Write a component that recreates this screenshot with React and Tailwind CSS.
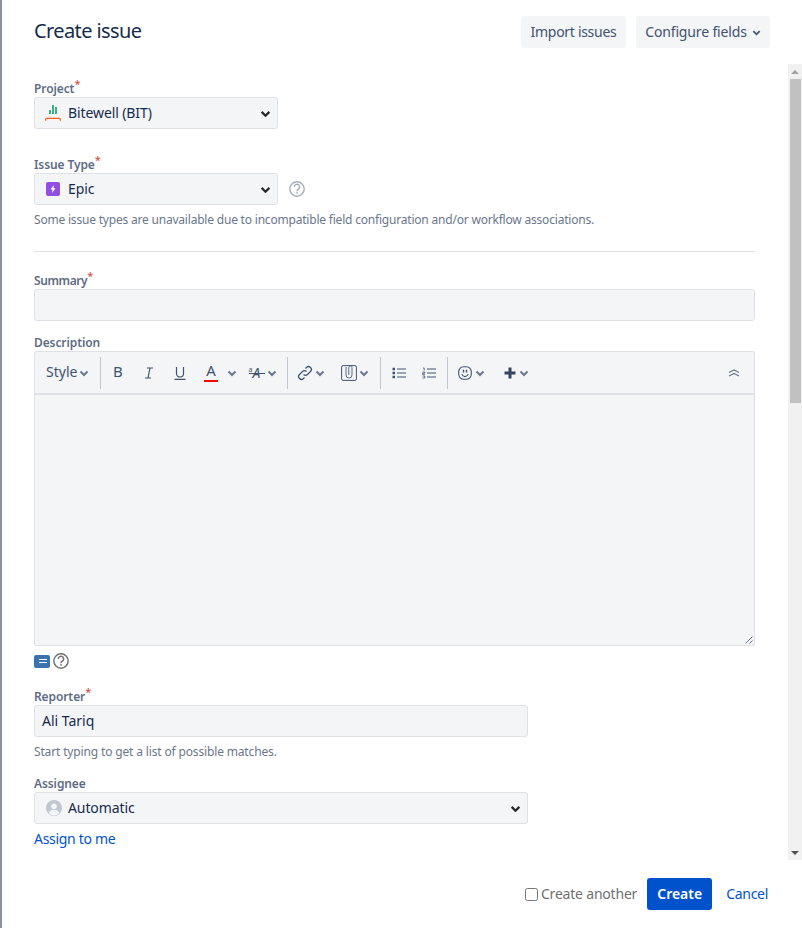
const font = { fontFamily: '"Noto Sans", sans-serif' };

const Chev = ({ className = '' }) => (
  <svg viewBox="0 0 10 10" className={className} fill="none" stroke="currentColor" strokeWidth="2">
    <path d="M1.500 3.500 5 7l3.500-3.500" />
  </svg>
);

const Label = ({ title, required, className = '', titleClass = 'tracking-[-0.1px]' }) => (
  <div className={`h-[18px] text-[12px] leading-[20px] font-semibold text-[#5e6c84] ${className}`}>
    <span className={titleClass}>{title}</span>
    {required && <span className="relative -top-[5px] text-[11px] font-normal leading-none text-[#d04437]">*</span>}
  </div>
);

const Select = ({ icon, value, className = '' }) => (
  <div className={`flex h-8 items-center rounded-[3px] border border-[#dfe1e6] bg-[#f4f5f7] pl-[11px] pr-[6px] text-[14px] text-[#172b4d] ${className}`}>
    <span className="flex w-[22px] shrink-0 items-center">{icon}</span>
    <span className="flex-1 pb-[2px] tracking-[-0.1px]">{value}</span>
    <Chev className="h-[11px] w-[11px] text-[#25272b]" />
  </div>
);

const Sep = () => <div className="mx-[5px] h-8 w-[1px] bg-[#c1c7d0]" />;

const ToolBtn = ({ children, className = '' }) => (
  <div className={`flex h-full items-center justify-center text-[#42526e] ${className}`}>{children}</div>
);

const SmallChev = () => <Chev className="h-[10px] w-[10px] shrink-0 text-[#6b778c]" />;

const HelpIcon = ({ className = '' }) => (
  <svg viewBox="0 0 16 16" className={`h-4 w-4 ${className}`} fill="none" stroke="currentColor" strokeWidth="1.400">
    <circle cx="8" cy="8" r="7.200" />
    <path d="M5.400 6a2.600 2.600 0 1 1 3.900 2.200c-.9.500-1.300 1-1.300 2" />
    <path d="M8 11.300v1.500" strokeWidth="1.600" />
  </svg>
);

const Toolbar = () => (
  <div className="flex h-[44px] items-center rounded-t-[3px] border border-b-2 border-[#dfe1e6] bg-[#f4f5f7] pl-[10px] pr-[14px] text-[14px] text-[#42526e]">
    <ToolBtn className="w-[50px] justify-start gap-[2px] pl-[1px]"><span className="pb-[2px]">Style</span><SmallChev /></ToolBtn>
    <Sep />
    <ToolBtn className="w-[24px] pb-[2px] text-[15px]">B</ToolBtn>
    <ToolBtn className="ml-[7px] w-[24px]">
      <svg viewBox="0 0 14 14" className="h-[14px] w-[14px]" fill="none" stroke="currentColor" strokeWidth="1.200"><path d="M5 2h6M3 12h6M8 2 6 12" /></svg>
    </ToolBtn>
    <ToolBtn className="ml-[7px] w-[24px]">
      <svg viewBox="0 0 14 14" className="h-[14px] w-[14px]" fill="none" stroke="currentColor" strokeWidth="1.200"><path d="M3.500 1v6.500a3.500 3.500 0 0 0 7 0V1M1.500 13.400h11" /></svg>
    </ToolBtn>
    <ToolBtn className="relative ml-[7px] w-[24px] text-[15px]">
      <span className="-mt-[4px]">A</span>
      <span className="absolute bottom-[11px] left-[5px] h-[2px] w-[14px] bg-[#ff0000]" />
    </ToolBtn>
    <ToolBtn className="ml-[2px] w-[14px]"><SmallChev /></ToolBtn>
    <ToolBtn className="ml-[4px] w-[39px] gap-[2px]">
      <span className="relative flex w-[16px] items-start leading-none">
        <span className="text-[7px] leading-[8px]">a</span>
        <span className="text-[14px] italic">A</span>
        <span className="absolute left-0 top-[7px] h-[1px] w-[16px] bg-[#42526e]" />
      </span>
      <SmallChev />
    </ToolBtn>
    <Sep />
    <ToolBtn className="w-[36px] gap-[2px]">
      <svg viewBox="0 0 16 16" className="h-[16px] w-[16px]" fill="none" stroke="currentColor" strokeWidth="1.300"><path d="M6.500 9.500a2.800 2.800 0 0 0 4 0l3-3a2.800 2.800 0 0 0-4-4l-1 1" /><path d="M9.500 6.500a2.800 2.800 0 0 0-4 0l-3 3a2.800 2.800 0 0 0 4 4l1-1" /></svg>
      <SmallChev />
    </ToolBtn>
    <ToolBtn className="ml-[8px] w-[36px] gap-[2px]">
      <svg viewBox="0 0 16 16" className="h-[16px] w-[16px]" fill="none" stroke="#42526e" strokeWidth="1"><rect x="0.600" y="0.600" width="14.800" height="14.800" rx="1.500" /><path d="M5 2v8a3 3 0 0 0 6 0V2.500a1.600 1.600 0 0 0-3.200 0V10" stroke="#5e6c84" /></svg>
      <SmallChev />
    </ToolBtn>
    <div className="ml-[2px]"><Sep /></div>
    <ToolBtn className="w-[26px]">
      <svg viewBox="0 0 14 12" className="h-[12px] w-[14px]" fill="none"><path d="M5 2h9M5 6h9M5 10h9" stroke="currentColor" strokeWidth="1" /><path d="M0.500 2h2.500M0.500 6h2.500M0.500 10h2.500" stroke="currentColor" strokeWidth="2.400" /></svg>
    </ToolBtn>
    <ToolBtn className="ml-[4px] w-[26px]">
      <svg viewBox="0 0 14 12" className="h-[12px] w-[14px]" fill="none" stroke="currentColor"><path d="M5 2h9M5 6h9M5 10h9" strokeWidth="1" /><path d="M1 1h1.200v2.600M0.500 5h2.300v1.200H0.500v1.200h2.400M0.500 9h2.400M0.500 11h2.400M2.800 9v2" strokeWidth="0.800" /></svg>
    </ToolBtn>
    <Sep />
    <ToolBtn className="w-[37px] gap-[3px]">
      <svg viewBox="0 0 14 14" className="h-[14px] w-[14px] shrink-0" fill="none" stroke="currentColor" strokeWidth="1.100"><rect x="0.700" y="0.700" width="12.600" height="12.600" rx="5" /><path d="M5.500 3.800v2.800M8.500 3.800v2.800" strokeWidth="1.400" /><path d="M3.800 8.200c.6 1.800 1.700 2.400 3.200 2.400s2.600-.6 3.200-2.400" /></svg>
      <SmallChev />
    </ToolBtn>
    <ToolBtn className="ml-[10px] w-[33px] gap-[3px]">
      <svg viewBox="0 0 12 12" className="h-[12px] w-[12px] shrink-0" fill="none" stroke="#344563" strokeWidth="3"><path d="M6 0.500v11M0.500 6h11" /></svg>
      <SmallChev />
    </ToolBtn>
    <div className="flex-1" />
    <svg viewBox="0 0 12 10" className="h-[10px] w-[12px] text-[#6b778c]" fill="none" stroke="currentColor" strokeWidth="1.200"><path d="M1 4.500 6 2l5 2.500M1 8 6 5.500 11 8" /></svg>
  </div>
);

const ScrollBar = () => (
  <div className="flex w-[14px] flex-col items-center bg-[#f1f1f1]">
    <div className="flex h-[15px] w-full shrink-0 items-center justify-center">
      <div className="h-0 w-0 border-x-[4px] border-b-[4px] border-x-transparent border-b-[#a3a3a3]" />
    </div>
    <div className="h-[324px] w-[11px] bg-[#c1c1c1]" />
    <div className="flex-1" />
    <div className="flex h-[15px] w-full shrink-0 items-center justify-center">
      <div className="h-0 w-0 border-x-[4px] border-t-[4px] border-x-transparent border-t-[#505050]" />
    </div>
  </div>
);

const App = () => {
  return (
    <div className="flex h-[928px] w-[802px] overflow-hidden bg-white" style={font}>
      <div className="w-[2px] shrink-0 bg-[#8993a4]" />
      <div className="flex min-w-0 flex-1 flex-col">
        <div className="flex h-[64px] shrink-0 items-start justify-between pl-[32px] pr-[32px] pt-4">
          <h2 className="text-[20px] leading-[30px] tracking-[-0.6px] text-[#172b4d]">Create issue</h2>
          <div className="flex gap-[10px] text-[14px] text-[#42526e]">
            <div className="flex h-8 w-[105px] items-center justify-center rounded-[3px] bg-[#f4f5f7] pb-[2px] tracking-[-0.3px]">Import issues</div>
            <div className="flex h-8 w-[134px] items-center justify-center gap-[5px] rounded-[3px] bg-[#f4f5f7] pb-[2px] tracking-[-0.15px]">
              Configure fields
              <Chev className="mt-[2px] h-[9px] w-[9px] text-[#42526e]" />
            </div>
          </div>
        </div>

        <div className="flex h-[796px] shrink-0">
          <div className="w-[786px] shrink-0 pl-[32px] pr-[33px] pt-[15px]">
            <Label title="Project" required />
            <Select
              className="w-[244px]"
              value="Bitewell (BIT)"
              icon={
                <svg viewBox="0 0 16 16" className="-ml-[1px] h-4 w-4">
                  <path d="M4 5h2v4H4zM7 0h2v9H7zM10 2h2v7h-2z" fill="#36b37e" />
                  <path d="M0.700 15.800v-1.500a1 1 0 0 1 1-1h12.600a1 1 0 0 1 1 1v1.500" fill="none" stroke="#ff5a1f" strokeWidth="1.300" />
                </svg>
              }
            />

            <Label title="Issue Type" required className="mt-[26px]" />
            <div className="flex items-center gap-[11px]">
              <Select
                className="w-[244px]"
                value="Epic"
                icon={
                  <span className="flex h-[14px] w-[14px] items-center justify-center rounded-[2px] bg-[#904ee2]">
                    <svg viewBox="0 0 10 10" className="h-[10px] w-[10px]"><path d="M5.800 1 2.500 5.600h2L4 9l3.500-4.800h-2z" fill="#fff" /></svg>
                  </span>
                }
              />
              <HelpIcon className="text-[#a5adba]" />
            </div>
            <p className="mt-[6px] text-[12px] leading-[18px] tracking-[-0.2px] text-[#6b778c]">
              Some issue types are unavailable due to incompatible field configuration and/or workflow associations.
            </p>

            <div className="mb-[19px] mt-[22px] h-[1px] bg-[#dfe1e6]" />

            <Label title="Summary" required titleClass="tracking-[-0.4px]" />
            <div className="h-8 rounded-[3px] border border-[#dfe1e6] bg-[#f4f5f7]" />

            <Label title="Description" className="mt-[12px]" />
            <Toolbar />
            <div className="relative h-[251px] rounded-b-[3px] border border-t-0 border-[#dfe1e6] bg-[#f4f5f7]">
              <svg viewBox="0 0 8 8" className="absolute bottom-[1px] right-[1px] h-2 w-2" stroke="#6b778c" fill="none"><path d="M0.500 7.500l7-7M4.500 7.500l3-3" /></svg>
            </div>

            <div className="mt-[6px] flex h-[18px] items-center gap-[3px]">
              <span className="flex h-[13px] w-[16px] flex-col items-center justify-center gap-[2px] rounded-[2px] bg-[#3b73af]">
                <span className="ml-[1px] h-[1px] w-[8px] bg-white" />
                <span className="ml-[1px] h-[1px] w-[8px] bg-white" />
              </span>
              <HelpIcon className="text-[#707070]" />
            </div>

            <Label title="Reporter" required className="mt-[17px]" />
            <div className="flex h-8 w-[494px] items-center rounded-[3px] border border-[#dfe1e6] bg-[#f4f5f7] px-[7px] pb-[2px] text-[14px] text-[#172b4d]">Ali Tariq</div>
            <p className="mt-[6px] text-[12px] leading-[18px] tracking-[-0.15px] text-[#6b778c]">Start typing to get a list of possible matches.</p>

            <Label title="Assignee" className="mt-[13px]" />
            <Select
              className="w-[494px]"
              value="Automatic"
              icon={
                <svg viewBox="0 0 16 16" className="h-4 w-4">
                  <circle cx="8" cy="8" r="8" fill="#c1c7d0" />
                  <circle cx="8" cy="6.200" r="2.800" fill="#f4f5f7" />
                  <path d="M2.800 13.200c.6-2.400 2.700-3.400 5.200-3.400s4.600 1 5.200 3.400A7.500 7.500 0 0 1 8 15.400a7.500 7.500 0 0 1-5.200-2.200z" fill="#f4f5f7" />
                </svg>
              }
            />
            <a className="mt-[5px] block text-[14px] leading-[20px] tracking-[-0.3px] text-[#0052cc]">Assign to me</a>
          </div>
          <ScrollBar />
        </div>

        <div className="flex flex-1 items-start justify-end pr-[34px] pt-[18px] text-[14px]">
          <div className="flex h-8 items-center">
            <input type="checkbox" className="mr-[3px] h-[13px] w-[13px]" readOnly />
            <span className="pb-[2px] tracking-[-0.2px] text-[#707070]">Create another</span>
          </div>
          <button className="ml-[10px] h-8 w-[65px] rounded-[3px] bg-[#0052cc] pb-[2px] font-semibold text-white">Create</button>
          <a className="ml-[14px] flex h-8 items-center pb-[2px] tracking-[-0.3px] text-[#0052cc]">Cancel</a>
        </div>
      </div>
    </div>
  );
};

export default App;
